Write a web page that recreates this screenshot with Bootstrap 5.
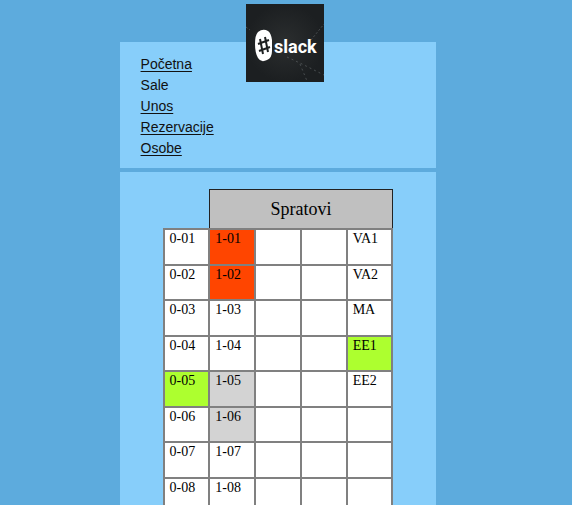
<!DOCTYPE html>
<html lang="sr-Latn">
<head>
<meta charset="utf-8">
<meta name="viewport" content="width=device-width, initial-scale=1">
<title>Sale</title>
<link href="https://cdn.jsdelivr.net/npm/bootstrap@5.3.0/dist/css/bootstrap.min.css" rel="stylesheet">
<style>
body { background: #5dabdd; font-family: "Liberation Sans", Arial, sans-serif; padding: 42px 16px 0 0; }
.page-column { width: 57%; }
.panel { background: #87cefa; }
.site-head { padding: 12px 21px 9px; margin-bottom: 4px; }
.site-head .nav-link { color: #111; font-size: 14px; line-height: 21px; text-decoration: underline; text-underline-offset: 2px; }
.site-head .nav-link.active { text-decoration: none; }
.logo { left: 40%; top: -38px; width: 78px; height: 78px; }
.rooms-panel { padding: 17px 43px 24px 43px; }
.rooms { width: 100%; table-layout: fixed; border-collapse: collapse; font-family: "Liberation Serif", "Times New Roman", serif; font-size: 14px; line-height: 16px; color: #000; }
.rooms thead th { height: 39px; background: #c0c0c0; border: 1px solid #222; font-size: 18px; line-height: 20px; font-weight: 400; }
.rooms thead td { border: 0; }
.rooms tbody td { height: 36px; padding: 1px 5px; border: 2px solid gray; background: #fff; }
.rooms tbody tr:nth-child(even) td { height: 35px; }
.rooms tbody td.busy { background: #ff4500; }
.rooms tbody td.free { background: #adff2f; }
.rooms tbody td.closed { background: #d3d3d3; }
</style>
</head>
<body>
<div class="page-column mx-auto">
  <header class="site-head panel position-relative">
    <nav class="nav flex-column align-items-start" aria-label="Meni">
      <a class="nav-link p-0" href="#pocetna">Početna</a>
      <a class="nav-link p-0 active" href="#sale" aria-current="page">Sale</a>
      <a class="nav-link p-0" href="#unos">Unos</a>
      <a class="nav-link p-0" href="#rezervacije">Rezervacije</a>
      <a class="nav-link p-0" href="#osobe">Osobe</a>
    </nav>
    <svg class="logo position-absolute" viewBox="0 0 78 78" role="img" aria-label="slack">
      <defs><radialGradient id="slate"><stop offset="0" stop-color="#2b2e2f"/><stop offset="1" stop-color="#1c1f21"/></radialGradient></defs>
      <rect width="78" height="78" fill="url(#slate)"/>
      <g fill="none" stroke="#777d80" stroke-width=".7" opacity=".7">
        <path d="M0 23l4 3M65 36L78 20" stroke-dasharray="2 2"/>
        <path d="M41 53l15 7 22 11M54 60l7 17" stroke-dasharray="2 3"/>
      </g>
      <path d="M12 28Q17 24 22 27Q25 29 26 36V47Q26 54 21 56Q15 59 12 54Q9 49 9 40Q9 31 12 28Z" fill="#fff"/>
      <path d="M14 35l3 15M19 33l3 15M12 40l11-4M13 47l11-4" fill="none" stroke="#1d2021" stroke-width="2"/>
      <text x="28" y="49" font-family="Roboto, Liberation Sans, sans-serif" font-size="18" font-weight="700" fill="#fff">slack</text>
    </svg>
  </header>
  <main class="rooms-panel panel">
    <table class="rooms">
      <thead><tr><td></td><th colspan="4" scope="colgroup" class="text-center align-middle">Spratovi</th></tr></thead>
      <tbody class="align-top">
        <tr><td>0-01</td><td class="busy">1-01</td><td></td><td></td><td>VA1</td></tr>
        <tr><td>0-02</td><td class="busy">1-02</td><td></td><td></td><td>VA2</td></tr>
        <tr><td>0-03</td><td>1-03</td><td></td><td></td><td>MA</td></tr>
        <tr><td>0-04</td><td>1-04</td><td></td><td></td><td class="free">EE1</td></tr>
        <tr><td class="free">0-05</td><td class="closed">1-05</td><td></td><td></td><td>EE2</td></tr>
        <tr><td>0-06</td><td class="closed">1-06</td><td></td><td></td><td></td></tr>
        <tr><td>0-07</td><td>1-07</td><td></td><td></td><td></td></tr>
        <tr><td>0-08</td><td>1-08</td><td></td><td></td><td></td></tr>
      </tbody>
    </table>
  </main>
</div>
<script src="https://cdn.jsdelivr.net/npm/bootstrap@5.3.0/dist/js/bootstrap.bundle.min.js"></script>
</body>
</html>
